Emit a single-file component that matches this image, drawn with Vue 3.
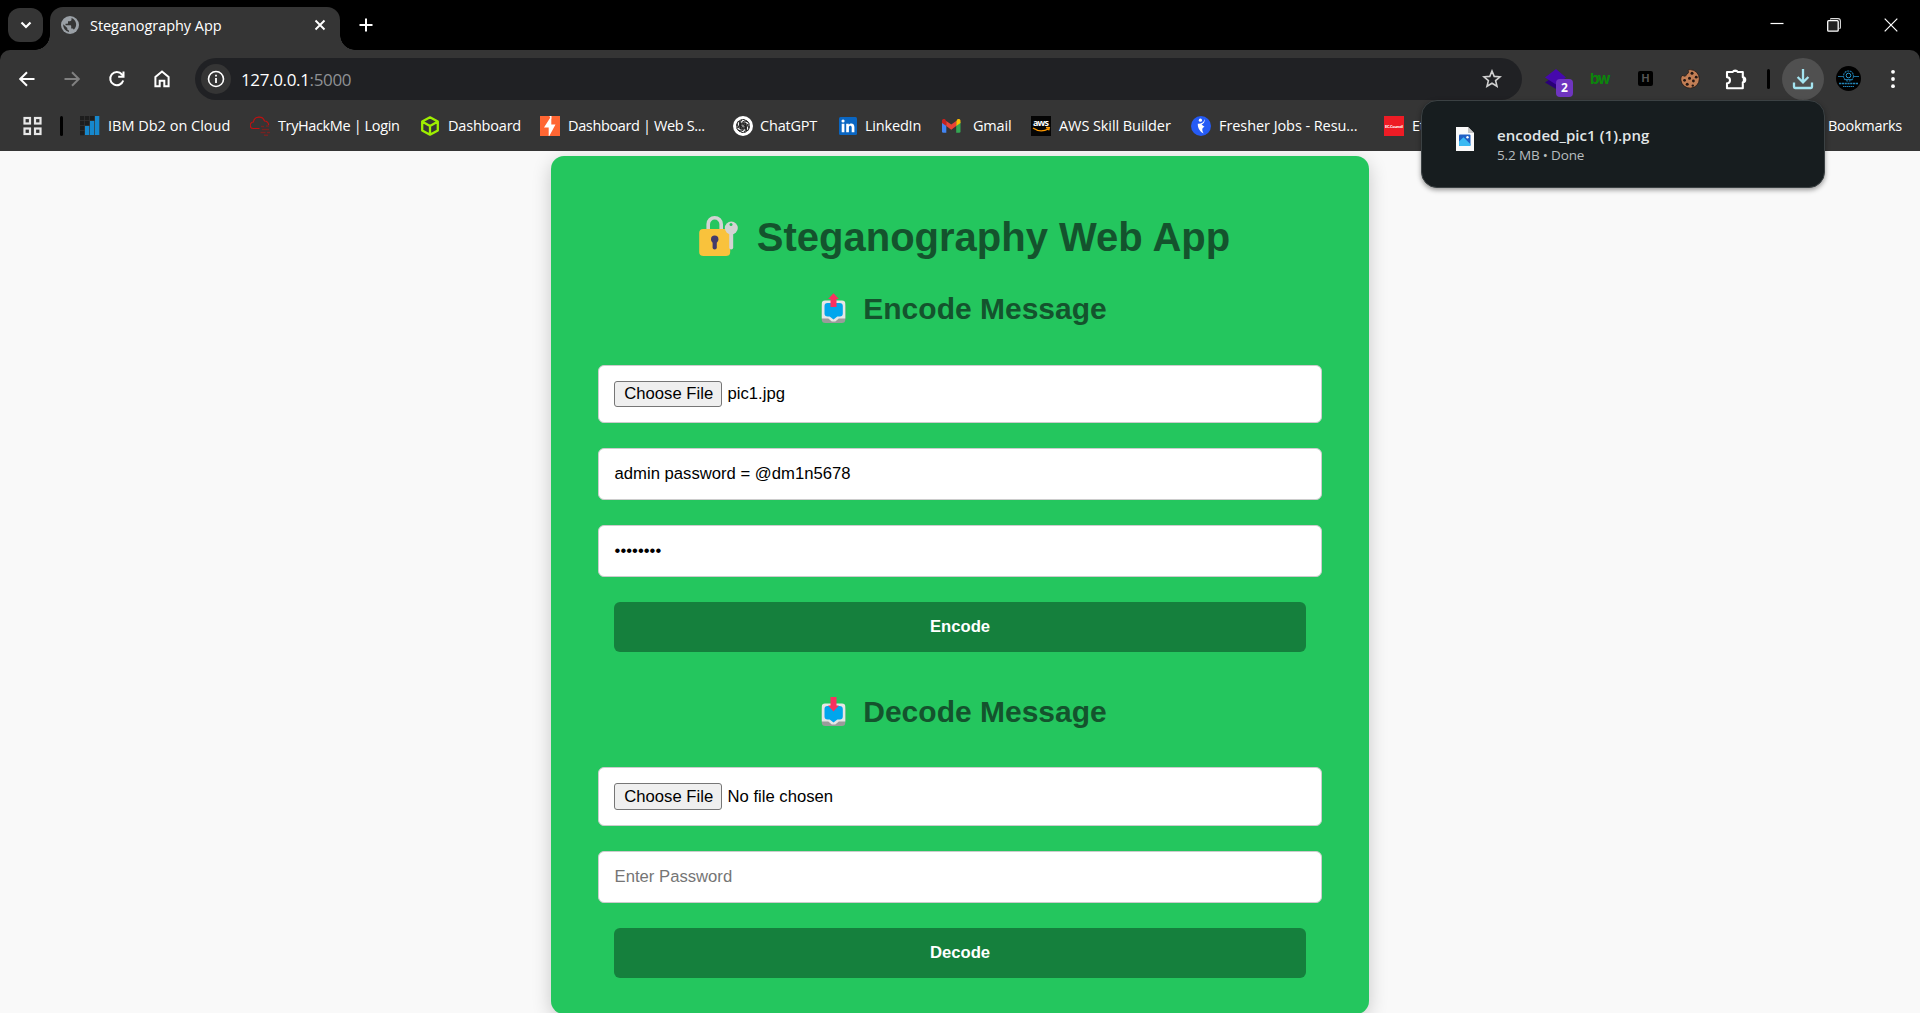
<script setup>
const bookmarks = [
  { icon: 'ibm', label: 'IBM Db2 on Cloud', width: 170, gap: 8, spacing: 0 },
  { icon: 'thm', label: 'TryHackMe | Login', width: 171, gap: 8, spacing: -0.38 },
  { icon: 'cube', label: 'Dashboard', width: 119, gap: 7, spacing: -0.2 },
  { icon: 'burp', label: 'Dashboard | Web S...', width: 193, gap: 8, spacing: -0.36 },
  { icon: 'gpt', label: 'ChatGPT', width: 106, gap: 7, spacing: -0.2 },
  { icon: 'linkedin', label: 'LinkedIn', width: 103, gap: 6, spacing: -0.2 },
  { icon: 'gmail', label: 'Gmail', width: 89, gap: 11, spacing: -0.2 },
  { icon: 'aws', label: 'AWS Skill Builder', width: 160, gap: 8, spacing: -0.08 },
  { icon: 'fresher', label: 'Fresher Jobs - Resu...', width: 193, gap: 8, spacing: -0.07 },
  { icon: 'ec', label: 'Et', width: 60, gap: 8, spacing: -0.2 },
]
</script>

<template>
  <div class="window">
    <header class="tabstrip">
      <div class="tabsearch">
        <svg width="12" height="8" viewBox="0 0 12 8"><path d="M1.5 1.5 6 6l4.5-4.500" fill="none" stroke="#fff" stroke-width="2.200" /></svg>
      </div>
      <div class="tab">
        <svg class="globe" width="18" height="18" viewBox="0 0 18 18">
          <circle cx="9" cy="9" r="9" fill="#9aa0a6" />
          <path d="M10.500 2v1.500c0 1-.8 1.700-1.700 1.700H7v1.700c0 .5-.4.9-.9.9H4.500v1.500h4.700c.6 0 1 .4 1 1v2.300h.9c.8 0 1.500.5 1.700 1.200A7 7 0 0 0 10.500 2z M2.200 8.300 6.300 12v.8c0 1 .8 1.700 1.700 1.700v1.400A7 7 0 0 1 2.200 8.300z" fill="#353535" />
        </svg>
        <span class="tabtitle">Steganography App</span>
        <svg class="tabclose" width="12" height="12" viewBox="0 0 12 12"><path d="M1.500 1.500l9 9M10.500 1.500l-9 9" stroke="#fff" stroke-width="1.900" /></svg>
      </div>
      <svg class="newtab" width="14" height="14" viewBox="0 0 14 14"><path d="M7 .5v13M.5 7h13" stroke="#fff" stroke-width="2" /></svg>
      <div class="controls">
        <svg width="14" height="14" viewBox="0 0 14 14"><path d="M.5 5.500h13" stroke="#fff" stroke-width="1.200" /></svg>
        <svg width="14" height="14" viewBox="0 0 14 14"><path d="M3.500 1.500V1Q3.500.6 4.500.6h6.500q2.400 0 2.400 2.400v6.500q0 1-1 1" fill="none" stroke="#ddd" stroke-width="1.100" /><rect x=".7" y="2.700" width="10.500" height="10.500" rx="1" fill="#222" stroke="#fff" stroke-width="1.300" /></svg>
        <svg width="14" height="14" viewBox="0 0 14 14"><path d="M.7.7l12.600 12.600M13.300.7.700 13.300" stroke="#fff" stroke-width="1.200" /></svg>
      </div>
    </header>

    <div class="chrome">
      <div class="toolbar">
        <div class="nav">
          <svg width="20" height="20" viewBox="0 0 20 20"><path d="M17.500 10H4M10 3.200 3.200 10l6.800 6.800" fill="none" stroke="#fff" stroke-width="2" /></svg>
          <svg width="20" height="20" viewBox="0 0 20 20"><path d="M2.500 10H16M10 3.200l6.800 6.800-6.800 6.800" fill="none" stroke="#808080" stroke-width="2" /></svg>
          <svg width="20" height="20" viewBox="0 0 20 20"><path d="M16.200 11.500A6.600 6.600 0 1 1 15 5.500l1.500 1.800" fill="none" stroke="#fff" stroke-width="2" /><path d="M17.500 2.500v6.300h-6.300v-2h4.300V2.500z" fill="#fff" /></svg>
          <svg width="20" height="20" viewBox="0 0 20 20"><path d="M3.400 17.300V8L10 2.600 16.600 8v9.300h-4.300v-5.500H7.700v5.500z" fill="none" stroke="#fff" stroke-width="2" /></svg>
        </div>
        <div class="omnibox">
          <div class="siteinfo">
            <svg width="18" height="18" viewBox="0 0 18 18"><circle cx="9" cy="9" r="7.500" fill="none" stroke="#fff" stroke-width="1.600" /><path d="M9 8v5M9 4.800v1.800" stroke="#fff" stroke-width="1.800" /></svg>
          </div>
          <span class="url">127.0.0.1<span class="port">:5000</span></span>
          <svg class="star" width="20" height="20" viewBox="0 0 20 20"><path d="M10 2l2.200 5.400 5.900.4-4.500 3.800 1.400 5.700-5-3.100-5 3.100 1.400-5.700L1.900 7.800l5.900-.4z" fill="none" stroke="#d0d0d0" stroke-width="1.600" /></svg>
        </div>
        <div class="extensions">
          <div class="ext wapp">
            <svg width="22" height="20" viewBox="0 0 22 20"><path d="M0 13.500 11 6l11 7.500L11 20z" fill="#2a0078" /><path d="M0 8.500 11 0l10 8.500-10 7z" fill="#4608ad" /></svg>
            <span class="badge">2</span>
          </div>
          <span class="ext bw">bw</span>
          <span class="ext hx">H</span>
          <svg class="ext" width="20" height="20" viewBox="0 0 20 20">
            <path d="M10.500.6A9.300 9.300 0 1 1 .8 11c-.2-3 .8-4.300 2.200-4.600C4.500 8 6.500 7 6.700 5 9 4.500 9 2.500 8 1.400 8.500.8 9.500.6 10.500.6z" fill="#c27e55" stroke="#241a16" stroke-width=".8" />
            <g fill="#241713"><circle cx="12" cy="4.300" r="1.500" /><circle cx="16.200" cy="8.200" r="1.400" /><circle cx="9.500" cy="9.300" r="1.500" /><circle cx="4.600" cy="11.300" r="1.400" /><circle cx="13.400" cy="12" r="1.400" /><circle cx="7.200" cy="15.300" r="1.500" /><circle cx="12.800" cy="16.600" r="1.200" /></g>
          </svg>
          <svg class="ext puzzle" width="22" height="22" viewBox="0 0 22 22"><path d="M2 4h5.800a2.500 2 0 0 1 4.800 0h5.200v5.300a2.400 2.400 0 0 1 0 4.900v6H2v-4.900a3 3 0 0 0 0-6z" fill="none" stroke="#fff" stroke-width="2.100" stroke-linejoin="round" /><path d="M7.800 4a2.500 2.500 0 0 1 4.800 0zM17.800 9.300a2.400 2.400 0 0 1 0 4.900z" fill="#fff" /></svg>
          <i class="bar"></i>
          <div class="download">
            <svg width="22" height="22" viewBox="0 0 22 22"><path d="M11 1v13M5.600 9l5.400 5.300L16.400 9M2 14.500V19q0 1 1 1h16q1 0 1-1v-4.500" fill="none" stroke="#a4e4f0" stroke-width="2.300" /></svg>
          </div>
          <svg class="profile" width="25" height="25" viewBox="0 0 25 25">
            <circle cx="12.500" cy="12.500" r="12.500" fill="#000" />
            <g fill="none" stroke="#1b6f9b"><circle cx="12.500" cy="10" r="5" stroke-width="1.200" stroke-dasharray="2 .7" /><circle cx="12.500" cy="9.500" r="2.300" stroke="#2a9bd0" /><path d="M8.500 13.500h8M2 10.500h5M18 10.500h5" /><path d="M3 17.500h19" stroke="#2383b5" stroke-width="1.400" stroke-dasharray="2.200 .6" /><path d="M7 20.500h11" stroke="#2383b5" stroke-dasharray="1.500 .5" /></g>
          </svg>
          <svg class="menu" width="4" height="20" viewBox="0 0 4 20"><g fill="#fff"><circle cx="2" cy="2.800" r="1.900" /><circle cx="2" cy="10" r="1.900" /><circle cx="2" cy="17.200" r="1.900" /></g></svg>
        </div>
      </div>

      <nav class="bookmarks">
        <svg class="apps" width="20" height="20" viewBox="0 0 20 20"><g fill="none" stroke="#e8e8e8" stroke-width="2.200"><rect x="1.500" y="2" width="5.500" height="5.500" /><rect x="12" y="2" width="5.500" height="5.500" /><rect x="1.500" y="12.500" width="5.500" height="5.500" /><rect x="12" y="12.500" width="5.500" height="5.500" /></g></svg>
        <i class="bar"></i>
        <div v-for="b in bookmarks" :key="b.icon" class="bookmark" :style="{ width: b.width + 'px', gap: b.gap + 'px' }">
          <svg width="20" height="20" viewBox="0 0 20 20">
            <template v-if="b.icon === 'ibm'">
              <path d="M0 0h4.300v4.300H0zM5 0h4.300v4.300H5zM10 0h4.300v4.300H10zM0 5h4.300v4.300H0zM5 5h4.300v4.300H5zM0 10h4.300v4.300H0zM0 15h4.300v4.300H0z" fill="#1d1d1d" />
              <path d="M15 0h4.300v19H15zM10 5h4.300v14H10zM5 10h4.300v9H5z" fill="#1688cd" />
            </template>
            <template v-else-if="b.icon === 'thm'">
              <path d="M9.500 12.500H3.700A3.200 3.200 0 0 1 3.300 6 5.800 5.800 0 0 1 14.500 5 4 4 0 0 1 18.600 9" fill="none" stroke="#c11111" stroke-width="1.200" />
              <path d="M11 10.500h3M16 10h3M12 13.500h7M10.500 16.500h5M17 16.500h3M14 19.300h4" stroke="#762222" stroke-width="1.500" />
            </template>
            <template v-else-if="b.icon === 'cube'">
              <path d="M9 1.300 16.800 5.600v8.800L9 18.700 1.200 14.400V5.600zM1.500 5.800 9 10l7.500-4.200M9 10v8.500" fill="none" stroke="#9fef00" stroke-width="2.300" stroke-linejoin="round" />
            </template>
            <template v-else-if="b.icon === 'burp'">
              <rect width="20" height="20" fill="#ff6633" /><path d="M11.300 0v8.500h4.200L9.300 20H8.700v-8.500H4z" fill="#fff" /><path d="M9.300 0h2v3z" fill="#fff" />
            </template>
            <template v-else-if="b.icon === 'gpt'">
              <circle cx="10" cy="10" r="10" fill="#fff" />
              <g fill="none" stroke="#222" stroke-width="1">
                <path v-for="n in 6" :key="n" :transform="`rotate(${n * 60} 10 10)`" d="M7.500 11.500V6.200a2.900 2.900 0 0 1 5-1.800L8.800 6.600v3.800M12.500 4.400a3 3 0 0 1 2.500 1.700" />
              </g>
            </template>
            <template v-else-if="b.icon === 'linkedin'">
              <rect y="1" width="18" height="18" rx="1.500" fill="#0a66c2" />
              <path d="M2.700 7.700h2.700v8.500H2.700zM7.200 7.700h2.600v1.200c1.500-2.300 5.600-1.800 5.600 2.100v5.200h-2.700v-4.700c0-2.300-2.800-2.200-2.800 0v4.700H7.200z" fill="#fff" /><circle cx="4.050" cy="5" r="1.600" fill="#fff" />
            </template>
            <template v-else-if="b.icon === 'gmail'">
              <path d="M0 6v9.500q0 1.300 1.300 1.300h3V9z" fill="#4285f4" /><path d="M18.500 6v9.500q0 1.300-1.300 1.300h-3V9z" fill="#34a853" />
              <path d="M14.200 5.500v4.600l4.300-3.200V5c0-2-2-2.500-3.300-1.500z" fill="#fbbc04" /><path d="M4.300 5.500v4.600L0 6.900V5c0-2 2-2.500 3.300-1.500z" fill="#c5221f" /><path d="M4.300 5l4.950 3.600L14.200 5v5.100l-4.950 3.700L4.300 10.100z" fill="#ea4335" />
            </template>
            <template v-else-if="b.icon === 'aws'">
              <rect width="20" height="20" fill="#050505" /><text x="10" y="10" text-anchor="middle" textLength="16" class="awstext">aws</text>
              <path d="M2 12c5 3.500 11 3.300 15.500.8M15 11.500l3.300.2-.6 2.700" fill="none" stroke="#ff9900" stroke-width="1.400" />
            </template>
            <template v-else-if="b.icon === 'fresher'">
              <circle cx="10" cy="10" r="10" fill="#255bf5" /><circle cx="9.400" cy="4.200" r="1.600" fill="#fff" /><path d="M13.700 3C13 6.500 10 8 6.800 7.800 6.500 12 9 16 12.700 17.500 10.500 14 11 11.500 13.500 10.700 12 9.500 10.800 9 10.700 8.500 13 7.500 14 5.500 13.700 3z" fill="#fff" />
            </template>
            <template v-else>
              <rect width="20" height="20" fill="#ee1c25" /><text x="10" y="11.700" text-anchor="middle" textLength="18" class="ectext">EC-Council</text>
            </template>
          </svg>
          <span :style="{ letterSpacing: b.spacing + 'px' }">{{ b.label }}</span>
        </div>
        <span class="allbookmarks">Bookmarks</span>
      </nav>
    </div>

    <aside class="popup">
      <svg width="18" height="24" viewBox="0 0 18 24"><path d="M0 0h12l6 6v18H0z" fill="#fafafa" /><path d="M12 0v6h6z" fill="#c4c4c4" /><rect x="3" y="7.500" width="11.500" height="11.500" rx="1" fill="#1f5fc4" /><path d="M3 18v-3.500l4.500-4.200 7 7V18q0 1-1 1H4q-1 0-1-1z" fill="#39b9f2" /><circle cx="11.500" cy="10.300" r="1.200" fill="#fff" /></svg>
      <div class="filetext">
        <span class="filename">encoded_pic1 (1).png</span>
        <span class="filestate">5.2 MB • Done</span>
      </div>
    </aside>

    <main class="page">
      <section class="card">
        <h1>
          <svg width="54" height="48" viewBox="1 1.500 54 48">
            <path d="M19 19v-7.300a6.500 6.500 0 0 1 13 0V19" fill="none" stroke="#d3d3d3" stroke-width="3.600" transform="translate(.2 1)" />
            <rect x="10.200" y="17.500" width="31" height="27" rx="4" fill="#f9c23c" />
            <path d="M42.200 20v16" stroke="#d3d3d3" stroke-width="4" stroke-linecap="round" />
            <circle cx="42.300" cy="16.500" r="6.500" fill="#d3d3d3" /><circle cx="42" cy="13" r="1.500" fill="#24c65e" />
            <circle cx="25.700" cy="27.700" r="3.700" fill="#433b6b" /><path d="M25.700 29v7" stroke="#433b6b" stroke-width="4.200" stroke-linecap="round" />
          </svg>
          <span>Steganography Web App</span>
        </h1>

        <h2>
          <svg width="42" height="36" viewBox="0.500 0 42 36">
            <rect x="9.300" y="12" width="23.500" height="20" rx="3.500" fill="#9b9b9b" />
            <path d="M12.500 9.500h17q3.300 0 3.300 3.300v14.700h-6.500l-3.500 3h-3.500l-3.500-3H9.300V12.800q0-3.300 3.200-3.300z" fill="#e6e6e6" />
            <path d="M15 12h12q3.300 0 3.300 3v7.500q0 3-3 3h-2.500L21 28.500l-3.800-3h-2q-3.200 0-3.200-3V15q0-3 3-3z" fill="#00a6ed" />
            <path d="M18 16V8h-2.400L21 2.200 26.400 8H24v8z" class="arrow" />
          </svg>
          <span>Encode Message</span>
        </h2>
        <div class="field file"><span class="choose">Choose File</span><span>pic1.jpg</span></div>
        <div class="field">admin password = @dm1n5678</div>
        <div class="field dots">••••••••</div>
        <div class="submit">Encode</div>

        <h2 class="second">
          <svg width="42" height="36" viewBox="0.500 0 42 36">
            <rect x="9.300" y="12" width="23.500" height="20" rx="3.500" fill="#9b9b9b" />
            <path d="M12.500 9.500h17q3.300 0 3.300 3.300v14.700h-6.500l-3.500 3h-3.500l-3.500-3H9.300V12.800q0-3.300 3.200-3.300z" fill="#e6e6e6" />
            <path d="M15 12h12q3.300 0 3.300 3v7.500q0 3-3 3h-2.500L21 28.500l-3.800-3h-2q-3.200 0-3.200-3V15q0-3 3-3z" fill="#00a6ed" />
            <path d="M18 3v8.500h-2.400L21 17.500l5.400-6H24V3z" class="arrow" />
          </svg>
          <span>Decode Message</span>
        </h2>
        <div class="field file tall"><span class="choose">Choose File</span><span>No file chosen</span></div>
        <div class="field placeholder">Enter Password</div>
        <div class="submit">Decode</div>
      </section>
    </main>
  </div>
</template>

<style>
body { margin: 0; background: #f9f9f9; overflow: hidden; }
</style>

<style scoped>
.window { position: relative; width: 1920px; height: 1013px; overflow: hidden; background: #f9f9f9; font-family: "Open Sans", "Noto Sans", sans-serif; }
svg { display: block; flex: none; }
.tabstrip { height: 50px; background: #000; display: flex; align-items: center; box-sizing: border-box; padding-left: 8px; }
.tabsearch { width: 35px; height: 34px; border-radius: 12px; background: #353535; display: flex; align-items: center; justify-content: center; flex: none; }
.tab { position: relative; margin-left: 7px; width: 290px; height: 43px; align-self: flex-end; border-radius: 13px 13px 0 0; background: #353535; display: flex; align-items: center; box-sizing: border-box; padding: 0 14px 7px 11px; }
.tab::before, .tab::after { content: ""; position: absolute; bottom: 0; width: 15px; height: 15px; }
.tab::before { left: -15px; background: radial-gradient(circle at 0 0, transparent 14.500px, #353535 15px); }
.tab::after { right: -15px; background: radial-gradient(circle at 100% 0, transparent 14.500px, #353535 15px); }
.tabtitle { margin-left: 11px; color: #fff; font-size: 14.500px; letter-spacing: -0.05px; flex: 1; white-space: nowrap; }
.newtab { margin-left: 19px; }
.controls { margin-left: auto; display: flex; gap: 43px; padding-right: 22px; }
.chrome { height: 101px; background: #000; color: #fff; }
.toolbar { height: 57px; background: #353535; border-radius: 10px 10px 0 0; display: flex; align-items: center; }
.nav { display: flex; gap: 25px; width: 195px; box-sizing: border-box; padding-left: 17px; flex: none; }
.omnibox { width: 1327px; height: 42px; border-radius: 21px; background: #202124; display: flex; align-items: center; box-sizing: border-box; padding: 0 20px 0 6px; flex: none; }
.siteinfo { width: 30px; height: 30px; border-radius: 50%; background: #353535; display: flex; align-items: center; justify-content: center; }
.url { margin-left: 10px; padding-top: 1px; font-size: 17px; letter-spacing: -0.35px; flex: 1; }
.port { color: #8f9194; }
.extensions { display: flex; align-items: center; }
.wapp { position: relative; margin-left: 23px; width: 28px; }
.badge { position: absolute; left: 11px; top: 10px; width: 17px; height: 18px; border-radius: 4px; background: #6f35c0; font-size: 12px; font-weight: 700; line-height: 18px; text-align: center; }
.bw { margin-left: 17px; width: 20px; color: #0b850b; font: 700 15px/20px "Inter", sans-serif; letter-spacing: -1.500px; }
.hx { margin-left: 28px; width: 15px; height: 15px; border-radius: 2px; background: #000; color: #555; font: 700 11px/15px "Liberation Sans", sans-serif; text-align: center; }
.hx + svg { margin-left: 27px; }
.puzzle { margin-left: 25px; }
.bar { display: block; width: 3px; height: 20px; border-radius: 2px; background: #000; }
.extensions .bar { margin-left: 20px; }
.download { margin-left: 12px; width: 42px; height: 42px; border-radius: 50%; background: #505050; display: flex; align-items: center; justify-content: center; }
.profile { margin-left: 12px; }
.menu { margin-left: 30px; }
.bookmarks { height: 44px; background: #353535; display: flex; align-items: center; box-sizing: border-box; padding: 0 0 7px 23px; white-space: nowrap; font-size: 14.500px; }
.bookmarks .bar { margin: 0 17px; flex: none; }
.bookmark { display: flex; align-items: center; flex: none; }
.allbookmarks { margin-left: auto; padding-right: 18px; letter-spacing: -0.25px; }
.awstext { font: 700 9px "Open Sans", sans-serif; fill: #fff; }
.ectext { font: 700 4px "Open Sans", sans-serif; fill: #fff; }
.popup { position: absolute; left: 1421px; top: 100px; width: 404px; height: 88px; box-sizing: border-box; border: 1px solid #3b4143; border-radius: 16px; background: #171d1f; box-shadow: 0 2px 5px rgba(0, 0, 0, .4); display: flex; padding: 26px 0 0 34px; z-index: 2; }
.filetext { margin-left: 23px; display: flex; flex-direction: column; color: #e1e6e7; white-space: nowrap; }
.filename { font-size: 15px; font-weight: 600; line-height: 20px; margin-top: -2px; letter-spacing: 0.06px; }
.filestate { font-size: 13.500px; line-height: 21px; color: #b7bebf; letter-spacing: -0.15px; }
.page { display: flex; justify-content: center; height: 862px; overflow: hidden; font-family: "Liberation Sans", Arial, sans-serif; }
.card { margin-top: 5px; width: 818px; height: 858px; flex: none; box-sizing: border-box; padding: 57px 47px 0; border-radius: 13px; background: #24c65e; box-shadow: 0 5px 19px rgba(0, 0, 0, .2); }
h1, h2 { margin: 0; display: flex; justify-content: center; align-items: center; color: #14532d; font-weight: 700; white-space: nowrap; }
h1 { height: 48px; font-size: 40px; gap: 13px; }
h2 { height: 36px; margin: 30px 0 38px; font-size: 30px; gap: 8px; }
.arrow { fill: #f8315f; }
.field { height: 52px; box-sizing: border-box; border: 1px solid #ccc; border-radius: 6px; background: #fff; color: #000; font-size: 16.670px; padding: 0 15.600px; display: flex; align-items: center; margin-bottom: 25px; white-space: nowrap; }
.field.file { height: 58px; padding: 0 15px; }
.choose { width: 108px; height: 26px; box-sizing: border-box; border: 1px solid #767676; border-radius: 3px; background: #efefef; display: flex; align-items: center; justify-content: center; padding-left: 1.500px; margin-right: 5.500px; }
.field.tall { height: 59px; }
.tall .choose { height: 27px; }
.placeholder { color: #757575; }
.submit { margin: 0 16px; height: 50px; border-radius: 6px; background: #15803d; color: #fff; font-size: 16.670px; font-weight: 700; display: flex; align-items: center; justify-content: center; }
.second { margin: 42px 0 37px; }
</style>
